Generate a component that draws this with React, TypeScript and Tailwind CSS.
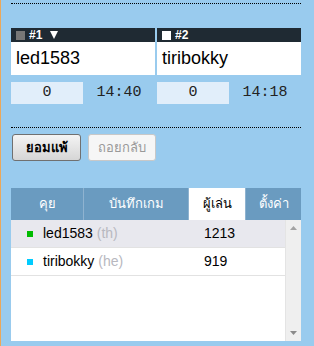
const sans = "font-['Tahoma','Liberation_Sans','DejaVu_Sans',sans-serif]";
const mono = "font-['Liberation_Mono','DejaVu_Sans_Mono',monospace]";

const players = [
  { n: "#1", name: "led1583", score: "0", time: "14:40", sq: "bg-[#777]", arrow: true },
  { n: "#2", name: "tiribokky", score: "0", time: "14:18", sq: "bg-white", arrow: false },
];

const rows = [
  { name: "led1583", lang: "th", rating: "1213", dot: "bg-[#00bb00]", bg: "bg-[#e8e8ee]" },
  { name: "tiribokky", lang: "he", rating: "919", dot: "bg-[#00ccff]", bg: "bg-white" },
];

const tabs = [
  { label: "คุย", w: "w-[72px]" },
  { label: "บันทึกเกม", w: "w-[105px]" },
  { label: "ผู้เล่น", w: "w-[57px]", active: true },
  { label: "ตั้งค่า", w: "flex-1" },
];

export default function App() {
  return (
    <div className={`h-[346px] w-[314px] overflow-hidden border-l border-[#eba85a] bg-[#99cbee] pl-[10px] ${sans}`}>
      <div className="w-[290px]">
        <div className="mt-[3px] border-t border-dotted border-black" />

        <div className="mt-[24px] flex gap-[2px]">
          {players.map((p) => (
            <div key={p.n} className="w-[144px]">
              <div className="flex h-[14px] items-center gap-[4px] bg-[#1f2a33] pl-[5px] text-[12px] font-bold leading-none text-white font-['Liberation_Sans',sans-serif]">
                <span className={`h-[9px] w-[9px] ${p.sq}`} />
                <span>{p.n}</span>
                {p.arrow && (
                  <svg className="ml-[4px]" width="8" height="8" viewBox="0 0 8 8">
                    <path d="M0 0h8L4 8z" fill="#fff" />
                  </svg>
                )}
              </div>
              <div className="flex h-[33px] items-center bg-white pl-[5px] text-[18px] text-black font-['Liberation_Sans',sans-serif]">
                {p.name}
              </div>
              <div className={`mt-[7px] flex h-[22px] items-center text-[15px] text-[#222] ${mono}`}>
                <div className="flex h-full w-[72px] items-center justify-center bg-[#e1eefa]">{p.score}</div>
                <div className="flex-1 text-center">{p.time}</div>
              </div>
            </div>
          ))}
        </div>

        <div className="mt-[23px] border-t border-dotted border-black" />

        <div className="mt-[6px] flex gap-[7px] pl-[1px]">
          <button className="h-[27px] w-[69px] rounded-[3px] border border-[#707070] bg-gradient-to-b from-[#f4f4f4] to-[#d6d6d6] text-[13px] font-bold text-black">
            ยอมแพ้
          </button>
          <button className="h-[27px] w-[68px] rounded-[3px] border border-[#c8c8c8] bg-[#f6f6f6] text-[13px] text-[#999]">
            ถอยกลับ
          </button>
        </div>

        <div className="mt-[27px] flex h-[153px] flex-col bg-white">
          <div className="flex h-[32px] bg-[#6a9bc0] text-[13px] text-white">
            {tabs.map((t, i) => (
              <div
                key={t.label}
                className={`flex items-center justify-center ${t.w} ${i > 0 ? "border-l border-[#8fb3d0]" : ""} ${t.active ? "bg-white text-black" : ""}`}
              >
                {t.label}
              </div>
            ))}
          </div>
          <div className="flex flex-1">
            <div className="flex-1">
              {rows.map((r) => (
                <div key={r.name} className={`flex h-[28px] items-center border-b border-[#e2e2e2] text-[14px] text-black font-['Liberation_Sans',sans-serif] ${r.bg}`}>
                  <span className={`ml-[16px] h-[6px] w-[6px] ${r.dot}`} />
                  <span className="ml-[10px] w-[161px]">
                    {r.name} <span className="text-[#b8b8c0]">({r.lang})</span>
                  </span>
                  <span>{r.rating}</span>
                </div>
              ))}
            </div>
            <div className="flex w-[16px] flex-col items-center justify-between border-l border-[#e4e4e4] bg-[#efefef] py-[6px]">
              <svg width="7" height="4" viewBox="0 0 7 4"><path d="M3.5 0L7 4H0z" fill="#a3a3a3" /></svg>
              <svg width="7" height="4" viewBox="0 0 7 4"><path d="M0 0h7L3.5 4z" fill="#8a8a8a" /></svg>
            </div>
          </div>
        </div>
      </div>
    </div>
  );
}
